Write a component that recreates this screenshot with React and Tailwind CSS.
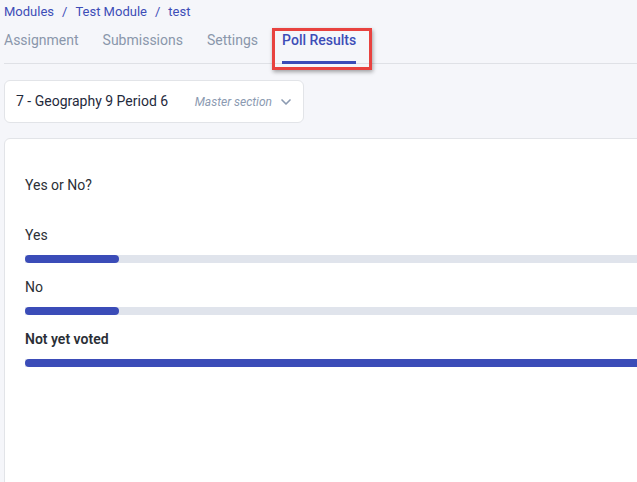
import React from "react";

const tabs = ["Assignment", "Submissions", "Settings"];

const results = [
  { label: "Yes", pct: 94, bold: false },
  { label: "No", pct: 94, bold: false },
  { label: "Not yet voted", pct: null, bold: true },
];

const App = () => {
  return (
    <div
      className="w-[637px] h-[482px] overflow-hidden bg-[#f5f6fa] font-['Roboto',sans-serif] relative"
    >
      <div className="pl-[4px] pt-[3px] text-[13px] text-[#3d4db7] flex gap-[8px] leading-[18px]">
        <span>Modules</span>
        <span>/</span>
        <span>Test Module</span>
        <span>/</span>
        <span>test</span>
      </div>

      <div className="ml-[4px] mt-[9px] flex border-b border-[#dfe1e6] w-[700px] h-[34px]">
        {tabs.map((t) => (
          <div key={t} className="text-[14px] text-[#8a97ab] mr-[24px] leading-[20px]">
            {t}
          </div>
        ))}
        <div className="relative text-[14px] font-medium text-[#3d4db7] leading-[20px] h-full">
          Poll Results
          <div className="absolute left-0 right-0 bottom-[-1px] h-[3px] bg-[#3b4cb8]" />
          <div className="absolute left-[-10px] right-[-16px] top-[-2px] bottom-[-7px] border-[3px] border-[#e8423f] shadow-[1px_2px_4px_rgba(0,0,0,0.35)]" />
        </div>
      </div>

      <div className="ml-[4px] mt-[16px] w-[300px] h-[43px] bg-white border border-[#e2e4e8] rounded-[6px] flex items-center pl-[11px] pr-[9px]">
        <span className="text-[14px] text-[#1f2a3c]">7 - Geography 9 Period 6</span>
        <span className="ml-auto text-[12px] italic text-[#8b9ab1]">Master section</span>
        <svg className="ml-[6px]" width="16" height="16" viewBox="0 0 24 24" fill="none" stroke="#8b9ab1" strokeWidth="2.5" strokeLinecap="round" strokeLinejoin="round">
          <path d="M6 9l6 6 6-6" />
        </svg>
      </div>

      <div className="ml-[4px] mt-[15px] w-[720px] h-[360px] bg-white border border-[#e2e4e8] rounded-[6px] pl-[20px] pt-[38px]">
        <div className="text-[14px] text-[#2b2f36] leading-[16px]">Yes or No?</div>
        <div className="mt-[34px] flex flex-col">
          {results.map((r) => (
            <div key={r.label} className="mb-[16px]">
              <div
                className={
                  r.bold
                    ? "text-[14px] font-semibold text-[#2b2f36] leading-[16px]"
                    : "text-[14px] text-[#2b2f36] leading-[16px]"
                }
              >
                {r.label}
              </div>
              <div className="mt-[12px] h-[8px] bg-[#e0e4ec] w-[680px]">
                {r.pct ? (
                  <div className="h-full bg-[#3b4cb8] rounded-full" style={{ width: r.pct }} />
                ) : (
                  <div className="h-full bg-[#3b4cb8] rounded-l-full w-full" />
                )}
              </div>
            </div>
          ))}
        </div>
      </div>
    </div>
  );
};

export default App;
